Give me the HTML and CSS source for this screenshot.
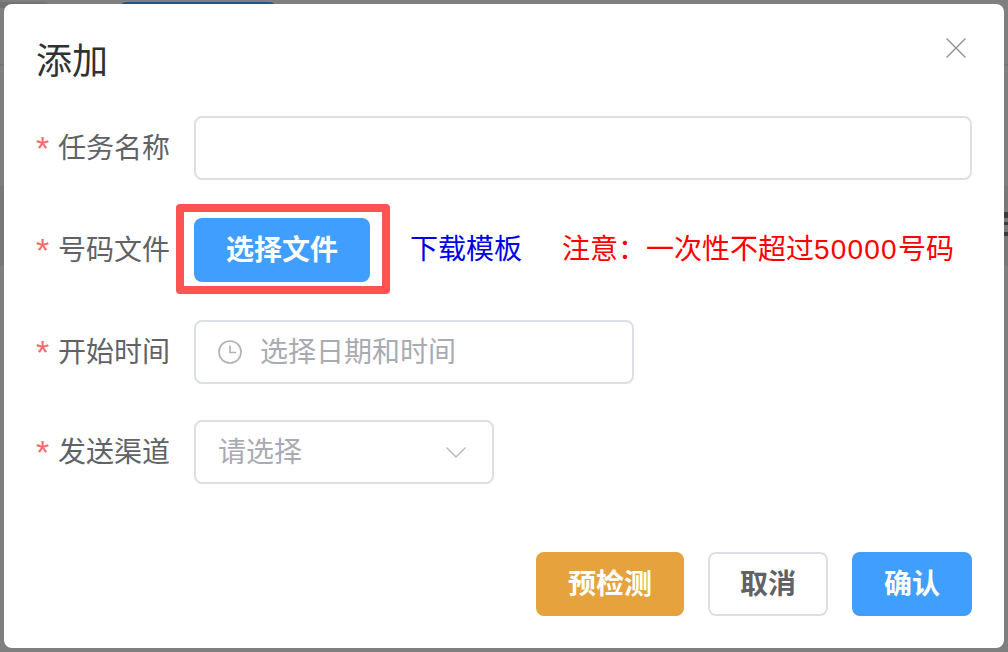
FILE: index.html
```html
<!DOCTYPE html>
<html lang="zh-CN">
<head>
    <meta charset="UTF-8">
    <meta name="viewport" content="width=device-width, initial-scale=1.0">
    <title>添加</title>
    <link rel="stylesheet" href="styles.css">
</head>
<body>
    <!-- bits of the page behind the mask -->
    <div class="behind-tab"></div>
    <div class="behind-btn"></div>
    <div class="behind-line"></div>
    <div class="behind-band"></div>
    <div class="behind-more"></div>

    <div class="dialog">
        <div class="dialog-header">
            <h2>添加</h2>
            <svg class="close-icon" viewBox="0 0 20 20" width="20" height="20">
                <path d="M0.5 0.5L19.5 19.5M19.5 0.5L0.5 19.5" fill="none" stroke="#909399" stroke-width="1.4"/>
            </svg>
        </div>
        <form class="form">
            <div class="form-row">
                <label class="form-label"><span class="star">*</span><span class="text">任务名称</span></label>
                <div class="input input-wide"></div>
            </div>
            <div class="form-row">
                <label class="form-label"><span class="star">*</span><span class="text">号码文件</span></label>
                <div class="file-cell">
                    <div class="highlight"></div>
                    <button type="button" class="btn btn-primary btn-file"><span class="text">选择文件</span></button>
                    <a class="download text">下载模板</a>
                    <span class="notice text">注意：一次性不超过<span class="num">50000</span>号码</span>
                </div>
            </div>
            <div class="form-row row-date">
                <label class="form-label"><span class="star">*</span><span class="text">开始时间</span></label>
                <div class="input input-date">
                    <svg class="clock-icon" viewBox="0 0 24 24" width="24" height="24">
                        <circle cx="12" cy="12" r="11" fill="none" stroke="#b0b3ba" stroke-width="1.7"/>
                        <path d="M12 5.5V12.5H18" fill="none" stroke="#b0b3ba" stroke-width="1.7"/>
                    </svg>
                    <span class="placeholder text">选择日期和时间</span>
                </div>
            </div>
            <div class="form-row">
                <label class="form-label"><span class="star">*</span><span class="text">发送渠道</span></label>
                <div class="input input-select">
                    <span class="placeholder text">请选择</span>
                    <svg class="arrow-icon" viewBox="0 0 20 11" width="20" height="11">
                        <path d="M0.5 0.5L10 10L19.5 0.5" fill="none" stroke="#b4b7bd" stroke-width="1.4"/>
                    </svg>
                </div>
            </div>
        </form>
        <div class="dialog-footer">
            <button type="button" class="btn btn-warning"><span class="text">预检测</span></button>
            <button type="button" class="btn btn-default"><span class="text">取消</span></button>
            <button type="button" class="btn btn-primary"><span class="text">确认</span></button>
        </div>
    </div>
</body>
</html>
```

FILE: styles.css
```css
html, body {
    margin: 0;
    height: 100%;
}
body {
    background: #7f7f7f;
    padding: 4px;
    box-sizing: border-box;
    font-family: "Liberation Sans", "Noto Sans CJK SC", sans-serif;
    overflow: hidden;
    position: relative;
}
.behind-tab {
    position: absolute;
    left: 0;
    top: 2px;
    width: 50px;
    height: 6px;
    background: #737373;
    border-radius: 0 6px 0 0;
}
.behind-btn {
    position: absolute;
    left: 120px;
    top: 2px;
    width: 156px;
    height: 6px;
    background: #20558c;
    border-radius: 6px 6px 0 0;
}
.behind-line {
    position: absolute;
    left: 0;
    top: 64px;
    width: 100%;
    height: 2px;
    background: #757578;
}
.behind-band {
    position: absolute;
    left: 0;
    top: 186px;
    width: 100%;
    height: 80px;
    background: #78787b;
}
.behind-more {
    position: absolute;
    left: 1004px;
    top: 212px;
    width: 4px;
    height: 26px;
    background: linear-gradient(#3c3c3c 0 6px, transparent 6px 10px, #3c3c3c 10px 13px, transparent 13px 20px, #3c3c3c 20px 24px, transparent 24px);
}
.dialog {
    background: #fff;
    border-radius: 8px;
    height: 644px;
    padding: 0 32px;
    box-sizing: border-box;
    display: flex;
    flex-direction: column;
    position: relative;
}
.dialog-header {
    display: flex;
    justify-content: space-between;
    align-items: flex-start;
    height: 112px;
    flex: none;
}
.dialog-header h2 {
    margin: 33px 0 0;
    font-size: 36px;
    font-weight: 400;
    color: #303133;
    line-height: 50px;
}
.close-icon {
    margin: 34px 6px 0 0;
}
.form {
    display: flex;
    flex-direction: column;
    gap: 38px;
}
.form-row {
    display: flex;
    align-items: center;
    height: 64px;
}
.row-date {
    margin-bottom: -2px;
}
.text {
    display: inline-block;
    padding-bottom: 4px;
}
.form-label {
    width: 158px;
    flex: none;
    font-size: 28px;
    color: #606266;
    display: flex;
    align-items: center;
}
.star {
    color: #f56c6c;
    width: 22px;
    font-size: 34px;
    line-height: 28px;
}
.input {
    height: 64px;
    box-sizing: border-box;
    border: 2px solid #dcdfe6;
    border-radius: 8px;
    display: flex;
    align-items: center;
}
.input-wide {
    width: 778px;
}
.input-date {
    width: 440px;
    padding-left: 22px;
}
.input-select {
    width: 300px;
    padding: 0 26px 0 22px;
    justify-content: space-between;
}
.placeholder {
    font-size: 28px;
    color: #a8abb2;
}
.clock-icon {
    margin-right: 18px;
}
.file-cell {
    position: relative;
    display: flex;
    align-items: center;
}
.highlight {
    position: absolute;
    left: -18px;
    top: -14px;
    width: 214px;
    height: 90px;
    box-sizing: border-box;
    border: 8px solid #fd5353;
    border-radius: 4px;
}
.btn {
    height: 64px;
    box-sizing: border-box;
    border: 0;
    border-radius: 8px;
    font-family: inherit;
    font-size: 28px;
    font-weight: 700;
    padding: 0;
}
.btn-primary {
    background: #409eff;
    color: #fff;
    width: 120px;
}
.btn-file {
    width: 176px;
    position: relative;
}
.download {
    color: #0000e6;
    font-size: 28px;
    margin-left: 40px;
    padding-bottom: 6px;
}
.notice {
    color: #f00;
    font-size: 28px;
    margin-left: 40px;
    padding-bottom: 6px;
}
.num {
    letter-spacing: 1.2px;
}
.dialog-footer {
    margin-top: auto;
    margin-bottom: 32px;
    display: flex;
    justify-content: flex-end;
    gap: 24px;
}
.btn-warning {
    background: #e6a23c;
    color: #fff;
    width: 148px;
}
.btn-default {
    background: #fff;
    color: #606266;
    width: 120px;
    border: 2px solid #dcdfe6;
}
```
